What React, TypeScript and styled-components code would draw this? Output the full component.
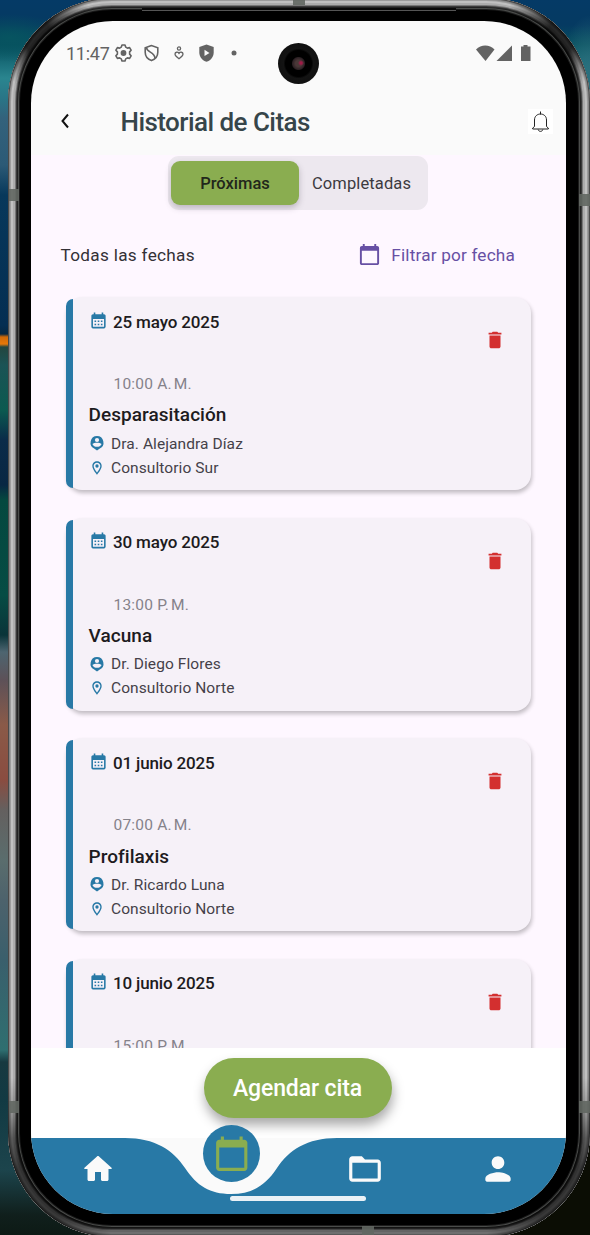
import React from 'react';
import styled, { createGlobalStyle } from 'styled-components';
import { MdCalendarToday, MdCalendarMonth, MdDelete, MdFolderOpen, MdOutlineLocationOn } from 'react-icons/md';

const Global = createGlobalStyle`
  * { box-sizing: border-box; }
  body { margin: 0; font-family: Roboto, "Liberation Sans", sans-serif; }
`;

const Desktop = styled.div`
  position: relative;
  width: 590px;
  height: 1235px;
  overflow: hidden;
  padding-left: 8px;
  background:
    radial-gradient(ellipse 30px 60px at 590px 75px, #2b6e7c, transparent),
    radial-gradient(ellipse 60px 24px at 10px 38px, #075460, transparent),
    linear-gradient(to left, #0b0d04 0, #0b0d04 120px, transparent 200px) 0 1090px / 590px 145px no-repeat,
    linear-gradient(#053a66 0, #053a62 25px, #06505f 45px, #2a858f 78px, #2a7486 100px, #33627c 118px, #2c5a76 165px,
      #07385b 195px, #042e52 325px, #052742 334px, #d06a08 337px, #e87808 344px, #23463f 347px, #1b5355 365px,
      #0b5a50 410px, #0a2b49 440px, #082743 485px, #04483f 500px, #064c44 595px, #0a3439 635px, #4d6570 652px,
      #5d5158 680px, #8a5a48 725px, #8a4c40 780px, #64605f 810px, #5a6d6d 860px, #4d626c 900px, #3a5f6c 960px,
      #2e6f70 1050px, #173940 1062px, #123a43 1100px, #1c444c 1170px, #101f1c 1215px, #0d1a15 1235px);
`;

const Phone = styled.div`
  position: relative;
  width: 582px;
  height: 1239px;
  margin-top: -2px;
  padding: 23px 24px 23px 23px;
  border-radius: 104px;
  background: #000;
  box-shadow:
    inset 0 0 0 1px #4a4a4a,
    inset 0 0 0 2px #858585,
    inset 0 0 0 3px #9c9c9c,
    inset 0 0 0 5px #c0c0c0,
    inset 0 0 0 7px #acacac,
    inset 0 0 0 8px #777,
    inset 0 0 0 9px #3a3a3a,
    inset 0 0 0 10px #222,
    inset 0 0 0 11px #4a4c4a,
    inset 0 0 0 12px #1c1c1c;

  &::before {
    content: '';
    position: absolute;
    inset: 0;
    padding: 10px;
    border-radius: inherit;
    background:
      linear-gradient(transparent 1080px, rgba(0, 0, 0, 0.42) 1140px),
      conic-gradient(transparent 19deg, rgba(0, 0, 0, 0.8) 23deg 25.5deg, transparent 28deg 150deg,
        rgba(0, 0, 0, 0.5) 153deg 158deg, transparent 163deg 197deg, rgba(0, 0, 0, 0.5) 202deg 207deg,
        transparent 210deg 332deg, rgba(0, 0, 0, 0.8) 334.5deg 337deg, transparent 341deg);
    mask: linear-gradient(#000 0 0) content-box exclude, linear-gradient(#000 0 0);
  }
`;

const Band = styled.span<{ $x: number; $y: number; $w: number; $h: number }>`
  position: absolute;
  left: ${p => p.$x}px;
  top: ${p => p.$y}px;
  width: ${p => p.$w}px;
  height: ${p => p.$h}px;
  background: rgba(98, 103, 98, 0.9);
`;

const Earpiece = styled.span`
  position: absolute;
  left: 134px;
  top: 10px;
  width: 314px;
  height: 3px;
  border-bottom: 1px solid #555;
  background: #0a0a0a;
`;

const Screen = styled.main`
  display: flex;
  flex-direction: column;
  width: 535px;
  height: 1193px;
  overflow: hidden;
  border-radius: 82px;
  background: #fafafa;
`;

const StatusBar = styled.div`
  display: flex;
  justify-content: space-between;
  align-items: center;
  flex: none;
  height: 64px;
  padding: 1px 35px 0 35px;
  color: #636363;
`;

const StatusGroup = styled.div`
  display: flex;
  align-items: center;
`;

const Clock = styled.span`
  width: 49px;
  font-size: 18px;
  line-height: 24px;
  letter-spacing: -0.25px;
`;

const Camera = styled.div`
  position: absolute;
  left: 270px;
  top: 45px;
  width: 41px;
  height: 41px;
  border-radius: 50%;
  background:
    radial-gradient(circle at 23px 20px, #a01c48 0 1px, transparent 3px),
    radial-gradient(circle, #4a3838 0 3px, #2c2024 6px, #000 7px 13px, #131313 15px, #101010 20px);
`;

const TopBar = styled.header`
  display: flex;
  align-items: center;
  flex: none;
  height: 70px;
  padding: 2px 13px 0 28px;
`;

const Title = styled.h1`
  flex: 1;
  margin: 1px 0 0 49.5px;
  font-size: 26px;
  font-weight: 500;
  line-height: 32px;
  letter-spacing: -0.55px;
  color: #36454a;
`;

const BellBox = styled.div`
  width: 25px;
  height: 25px;
  background: #fff;
`;

const Content = styled.section`
  flex: none;
  height: 893px;
  overflow: hidden;
  background: #fef7ff;
`;

const Segments = styled.div`
  display: flex;
  width: 260px;
  height: 53.5px;
  margin: 1px 0 0 137px;
  padding: 5px 3px;
  border-radius: 11px;
  background: #ede8ef;
`;

const Segment = styled.button<{ $active?: boolean }>`
  width: ${p => (p.$active ? 128 : 125)}px;
  height: 44px;
  padding: 0;
  border: 0;
  border-radius: 9px;
  background: ${p => (p.$active ? '#8aad50' : 'transparent')};
  box-shadow: ${p => (p.$active ? '0 3px 6px rgba(60, 50, 70, 0.28)' : 'none')};
  color: ${p => (p.$active ? '#22271b' : '#3c3a40')};
  font-family: inherit;
  font-size: 16.5px;
  font-weight: ${p => (p.$active ? 500 : 400)};
  letter-spacing: ${p => (p.$active ? 0 : 0.12)}px;
`;

const FilterRow = styled.div`
  display: flex;
  justify-content: space-between;
  align-items: center;
  height: 24px;
  margin: 33px 51px 0 29.5px;
  font-size: 17.2px;
  letter-spacing: 0.3px;
  color: #333036;
`;

const Filter = styled.span`
  display: flex;
  align-items: center;
  gap: 10px;
  letter-spacing: 0.18px;
  color: #6750a4;
`;

const Card = styled.article`
  display: flex;
  position: relative;
  width: 465.5px;
  height: 193px;
  margin: 30.5px 0 0 34.5px;
  border-radius: 16px;
  background: #f6f1f8;
  box-shadow: 1px 3px 4px rgba(0, 0, 0, 0.24);

  & + & { margin-top: 27.6px; }
`;

const Accent = styled.div`
  flex: none;
  width: 7.5px;
  margin: 2px 0;
  border-radius: 7.5px 0 0 7.5px;
  background: #2879a6;
`;

const CardBody = styled.div`
  flex: 1;
  padding: 12.6px 0 0 15.5px;
`;

const DateLine = styled.div`
  display: flex;
  align-items: center;
  height: 24px;
  gap: 5.5px;
  font-size: 17px;
  font-weight: 500;
  letter-spacing: -0.15px;
  color: #1d1b20;

  svg { margin-top: -3px; }
`;

const Time = styled.div`
  margin: 40.4px 0 0 25px;
  font-size: 15.5px;
  line-height: 20px;
  letter-spacing: 0.2px;
  color: #85828a;
`;

const Service = styled.h2`
  margin: 8.4px 0 0;
  font-size: 19px;
  font-weight: 500;
  line-height: 26px;
  letter-spacing: 0.05px;
  color: #1d1b20;
`;

const Detail = styled.div`
  display: flex;
  align-items: center;
  height: 24px;
  gap: 6.5px;
  font-size: 15.5px;
  letter-spacing: 0.08px;
  color: #454149;

  ${Service} + & { margin-top: 3.3px; }
`;

const Remove = styled.span`
  padding: 32px 25px 0 0;
  line-height: 0;
`;

const Action = styled.div`
  display: flex;
  justify-content: center;
  flex: none;
  height: 90.4px;
  padding: 10px 2px 0 0;
  background: #fff;
`;

const Book = styled.button`
  width: 188px;
  height: 60px;
  padding: 0;
  border: 0;
  border-radius: 30px;
  background: #8aad50;
  box-shadow: 1px 7px 12px rgba(0, 0, 0, 0.34);
  color: #fff;
  font-family: inherit;
  font-size: 23px;
  font-weight: 500;
  letter-spacing: -0.12px;
`;

const Nav = styled.nav`
  position: relative;
  flex: none;
  width: 535px;
  height: 76px;
`;

const NavShape = styled.svg`
  position: absolute;
  left: 0;
  top: 0;
`;

const NavItems = styled.div`
  position: relative;
  display: flex;
  width: 534px;
  height: 62px;
  align-items: center;
  color: #fafafa;
`;

const NavItem = styled.span`
  display: flex;
  justify-content: center;
  width: 133.75px;
`;

const Selected = styled.span`
  display: flex;
  justify-content: center;
  align-items: center;
  width: 57.5px;
  height: 57.5px;
  margin-top: -32px;
  border-radius: 50%;
  background: #2879a6;
  color: #8aad50;
`;

const HomeIndicator = styled.span`
  position: absolute;
  left: 199px;
  top: 57.5px;
  width: 136px;
  height: 5px;
  border-radius: 3px;
  background: #eaf1f6;
`;

const StatusIcons = () => (
  <svg width="124" height="20" viewBox="0 0 124 20" fill="none" stroke="#636363" strokeWidth="1.6">
    <path d="M6.3 3.1 7 1h3l.7 2.1 1.7 1 2.2-.5 1.5 2.6-1.5 1.7v2.2l1.5 1.7-1.5 2.6-2.2-.5-1.7 1L10 17H7l-.7-2.1-1.7-1-2.2.5-1.5-2.6 1.5-1.7V7.9L.9 6.2l1.5-2.6 2.2.5z" strokeLinejoin="round" />
    <circle cx="8.5" cy="9" r="2.9" fill="#636363" stroke="none" />
    <path d="M36.5 1.5 30.2 3.7v4.6c0 3.8 2.7 7 6.3 8.3 3.6-1.3 6.3-4.5 6.3-8.3V3.7z" />
    <path d="M31.5 3.5c0 5 8.5 4.5 8.5 11" />
    <g strokeWidth="1.3">
      <circle cx="64" cy="4.5" r="1.6" />
      <path d="M64 14.7c-2.5-1.7-4-3-4-4.6 0-2.2 2.8-2.5 4-.7 1.2-1.8 4-1.5 4 .7 0 1.6-1.5 2.9-4 4.6z" />
    </g>
    <path d="M91.5.5 84.3 3v5.5c0 4.3 3 8 7.2 9.3 4.2-1.3 7.2-5 7.2-9.3V3z" fill="#636363" stroke="none" />
    <path d="m89.5 5.7 5 3.2-5 3.2z" fill="#fafafa" stroke="none" />
    <circle cx="119" cy="9" r="2.5" fill="#636363" stroke="none" />
  </svg>
);

const SignalIcons = () => (
  <svg width="55" height="17" viewBox="0 0 55 17" fill="#636363">
    <path d="M0 4.5C5-1 13.5-1 18.5 4.5L9.5 16z" />
    <path d="M36 .5V16H20.5z" />
    <path d="M47.5 0h4v1.500h3V16h-9.500V1.500H47.500z" />
  </svg>
);

const Bell = () => (
  <svg width="25" height="25" viewBox="0 0 25 25" fill="none" stroke="#222" strokeWidth="1">
    <path d="M12.5 2.5v3M6.5 17.5V11c0-8 12-8 12 0v6.5l1.8 1.5v1H4.700v-1zM10.200 20.500c.3 2.500 4.300 2.500 4.600 0" />
  </svg>
);

const Doctor = () => (
  <svg width="16" height="17" viewBox="0 0 16 17">
    <path d="M8 1a6.6 6.6 0 0 1 2.8 12.5L8 15.5l-2.8-2A6.6 6.6 0 0 1 8 1z" fill="#2879a6" />
    <circle cx="8" cy="5" r="2.1" fill="#f6f1f8" />
    <path d="M3.4 8.9c2-1.7 7.2-1.7 9.2 0-1.6 3.9-7.600 3.900-9.200 0z" fill="#f6f1f8" />
  </svg>
);

const HomeIcon = () => (
  <svg width="36" height="36" viewBox="0 0 24 24" fill="currentColor">
    <path d="M10 19v-5h4v5c0 .55.45 1 1 1h3c.55 0 1-.45 1-1v-7h1.7c.46 0 .68-.57.33-.87L12.67 3.6c-.38-.34-.96-.34-1.34 0l-8.36 7.53c-.34.3-.13.87.33.87H5v7c0 .55.45 1 1 1h3c.55 0 1-.45 1-1z" />
  </svg>
);

const ProfileIcon = () => (
  <svg width="38" height="38" viewBox="0 0 24 24" fill="currentColor">
    <path d="M12 12c2.21 0 4-1.79 4-4s-1.79-4-4-4-4 1.79-4 4 1.79 4 4 4zm0 2c-2.67 0-8 1.34-8 4v1c0 .55.45 1 1 1h14c.55 0 1-.45 1-1v-1c0-2.66-5.33-4-8-4z" />
  </svg>
);

const appointments = [
  { date: '25 mayo 2025', time: '10:00 A.\u202fM.', service: 'Desparasitación', doctor: 'Dra. Alejandra Díaz', place: 'Consultorio Sur' },
  { date: '30 mayo 2025', time: '13:00 P.\u202fM.', service: 'Vacuna', doctor: 'Dr. Diego Flores', place: 'Consultorio Norte' },
  { date: '01 junio 2025', time: '07:00 A.\u202fM.', service: 'Profilaxis', doctor: 'Dr. Ricardo Luna', place: 'Consultorio Norte' },
  { date: '10 junio 2025', time: '15:00 P.\u202fM.', service: '', doctor: '', place: '' },
];

export default function App() {
  return (
    <>
      <Global />
      <Desktop>
        <Phone>
          <Band $x={285} $y={2} $w={12} $h={5} />
          <Band $x={1} $y={191} $w={10} $h={12} />
          <Band $x={571} $y={196} $w={11} $h={12} />
          <Band $x={1} $y={1103} $w={10} $h={12} />
          <Band $x={571} $y={1103} $w={11} $h={12} />
          <Band $x={354} $y={1228} $w={12} $h={9} />
          <Earpiece />
          <Screen>
            <StatusBar>
              <StatusGroup>
                <Clock>11:47</Clock>
                <StatusIcons />
              </StatusGroup>
              <SignalIcons />
            </StatusBar>
            <TopBar>
              <svg width="12" height="16" viewBox="0 0 12 16" fill="none" stroke="#111" strokeWidth="2">
                <path d="M9 1.5 3.5 8 9 14.5" />
              </svg>
              <Title>Historial de Citas</Title>
              <BellBox><Bell /></BellBox>
            </TopBar>
            <Content>
              <Segments>
                <Segment $active>Próximas</Segment>
                <Segment>Completadas</Segment>
              </Segments>
              <FilterRow>
                <span>Todas las fechas</span>
                <Filter><MdCalendarToday size={23} />Filtrar por fecha</Filter>
              </FilterRow>
              {appointments.map(a => (
                <Card key={a.date}>
                  <Accent />
                  <CardBody>
                    <DateLine><MdCalendarMonth size={19} color="#2879a6" />{a.date}</DateLine>
                    <Time>{a.time}</Time>
                    {a.service && (
                      <>
                        <Service>{a.service}</Service>
                        <Detail><Doctor />{a.doctor}</Detail>
                        <Detail><MdOutlineLocationOn size={16} color="#2879a6" />{a.place}</Detail>
                      </>
                    )}
                  </CardBody>
                  <Remove><MdDelete size={22} color="#d32f2f" /></Remove>
                </Card>
              ))}
            </Content>
            <Action><Book>Agendar cita</Book></Action>
            <Nav>
              <NavShape width="535" height="76" viewBox="0 0 535 76" fill="#2879a6">
                <path d="M0 0H94C124 0 142 12 154 30 166 48 179 56 200 56S234 48 246 30C258 12 276 0 306 0H535V76H0z" />
              </NavShape>
              <NavItems>
                <NavItem><HomeIcon /></NavItem>
                <NavItem><Selected><MdCalendarToday size={37.5} /></Selected></NavItem>
                <NavItem><MdFolderOpen size={38} /></NavItem>
                <NavItem><ProfileIcon /></NavItem>
              </NavItems>
              <HomeIndicator />
            </Nav>
          </Screen>
          <Camera />
        </Phone>
      </Desktop>
    </>
  );
}
